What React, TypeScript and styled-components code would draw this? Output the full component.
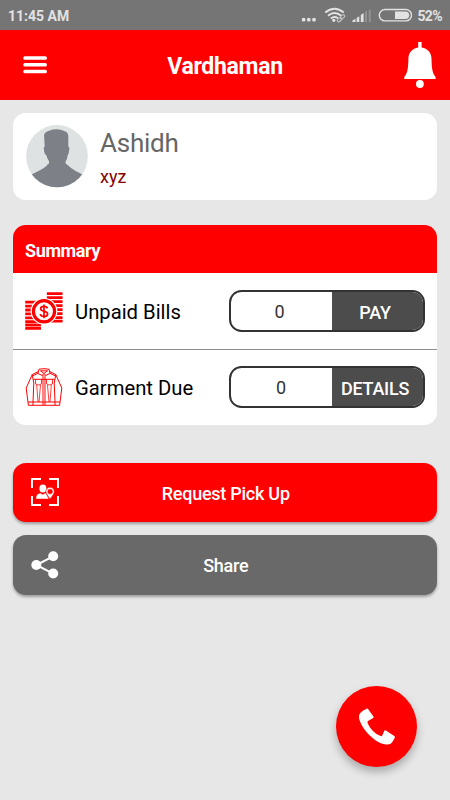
import React from "react";
import styled, { createGlobalStyle } from "styled-components";

const RED = "#ff0000";

const GlobalStyle = createGlobalStyle`
  *, *::before, *::after { box-sizing: border-box; }
  body { margin: 0; background: #e7e7e7; }
  svg { display: block; flex: none; }
  button { border: 0; padding: 0; font: inherit; color: inherit; }
`;

const Screen = styled.div`
  position: relative;
  width: 450px;
  height: 800px;
  overflow: hidden;
  background: #e7e7e7;
  font-family: Roboto, "Liberation Sans", sans-serif;
`;

const StatusBar = styled.div`
  display: flex;
  align-items: center;
  justify-content: space-between;
  height: 30px;
  padding: 1px 8px 0 8px;
  background: #757575;
  color: #e2e2e2;
`;

const Clock = styled.span`
  font-size: 14px;
  font-weight: 700;
  line-height: 16px;
`;

const StatusIcons = styled.div`
  display: flex;
  align-items: center;

  svg {
    margin-bottom: 2px;
  }
`;

const Percent = styled.span`
  margin-left: 5px;
  font-size: 14px;
  letter-spacing: -0.6px;
  font-weight: 700;
  line-height: 16px;
`;

const Header = styled.header`
  display: grid;
  grid-template-columns: 60px 1fr 60px;
  align-items: center;
  height: 70px;
  background: ${RED};
  color: #fff;
`;

const IconButton = styled.button<{ $align: "start" | "end" }>`
  display: flex;
  justify-content: ${(p) => (p.$align === "start" ? "flex-start" : "flex-end")};
  padding: ${(p) => (p.$align === "start" ? "0 0 0 23px" : "1px 14px 0 0")};
  background: none;
`;

const Title = styled.h1`
  margin: 4px 0 0;
  font-size: 23px;
  letter-spacing: -0.3px;
  line-height: 28px;
  font-weight: 700;
  text-align: center;
`;

const Content = styled.main`
  display: flex;
  flex-direction: column;
  padding: 12.5px 13px 0 12.5px;
`;

const ProfileCard = styled.section`
  display: flex;
  gap: 12.5px;
  height: 87.5px;
  padding: 12.5px 13px;
  border-radius: 12.5px;
  background: #fff;
`;

const ProfileText = styled.div`
  display: flex;
  flex-direction: column;
`;

const Name = styled.div`
  margin-top: 1px;
  font-size: 26px;
  letter-spacing: -0.25px;
  line-height: 34px;
  color: #666;
`;

const Handle = styled.div`
  margin-top: 5px;
  font-size: 18px;
  line-height: 24px;
  color: #860000;
`;

const SummaryCard = styled.section`
  display: flex;
  flex-direction: column;
  height: 200px;
  margin-top: 25px;
  border-radius: 12.5px;
  background: #fff;
  overflow: hidden;
`;

const SummaryTitle = styled.h2`
  margin: 0;
  height: 48.4px;
  padding: 2px 12.5px 0;
  background: ${RED};
  color: #fff;
  font-size: 18px;
  letter-spacing: -0.38px;
  line-height: 47px;
  font-weight: 700;
`;

const SummaryRow = styled.div`
  display: flex;
  align-items: center;
  flex: 1;
  padding: 0 12px 0 12.5px;

  & + & {
    border-top: 1px solid #8c8c8c;
  }
`;

const RowLabel = styled.span`
  flex: 1;
  padding: 1px 0 0 12px;
  font-size: 20.25px;
  line-height: 26px;
  color: #000;
`;

const Pill = styled.div`
  display: flex;
  width: 196px;
  height: 42px;
  border: 2px solid #333;
  border-radius: 12.5px;
  background: #fff;
  overflow: hidden;
`;

const Count = styled.span<{ $trim: number }>`
  width: 101px;
  padding: 0 ${(p) => p.$trim}px 0 0;
  font-size: 18px;
  line-height: 39px;
  text-align: center;
  color: #333;
`;

const PillButton = styled.button`
  flex: 1;
  padding: 2px 5px 0 0;
  background: #4c4c4c;
  color: #fff;
  font-size: 18px;
  letter-spacing: -0.25px;
  font-weight: 500;
  text-align: center;
`;

const ActionButton = styled.button<{ $tone: string; $height: number; $gap: number }>`
  display: grid;
  grid-template-columns: 46px 1fr 46px;
  align-items: center;
  height: ${(p) => p.$height}px;
  margin-top: ${(p) => p.$gap}px;
  padding-left: 18.5px;
  padding-right: 16.5px;
  border-radius: 13px;
  background: ${(p) => p.$tone};
  color: #fff;
  font-size: 18px;
  letter-spacing: -0.25px;
  font-weight: 500;
  box-shadow: 0 2px 3px rgba(0, 0, 0, 0.32);
`;

const ActionLabel = styled.span`
  padding-top: 2px;
`;

const CallButton = styled.button`
  position: absolute;
  right: 33px;
  bottom: 33px;
  display: flex;
  align-items: center;
  justify-content: center;
  width: 81px;
  height: 81px;
  border-radius: 50%;
  background: ${RED};
  box-shadow: 0 5px 9px rgba(0, 0, 0, 0.27);
`;

const StatusGlyphs = () => (
  <svg width="112" height="20" viewBox="300 5 112 20" fill="#e2e2e2">
    <circle cx="303.6" cy="19.7" r="1.9" />
    <circle cx="308.8" cy="19.7" r="1.9" />
    <circle cx="314" cy="19.7" r="1.9" />
    <g fill="none" stroke="#e2e2e2" strokeWidth="1.9">
      <path d="M325.2 12.6Q334.5 5 343.8 12.6" />
      <path d="M328 15.8Q334.5 10.3 341.3 15.8" />
      <path d="M330.8 18.6Q334.3 15.8 338 18.2" />
    </g>
    <circle cx="333.8" cy="20.3" r="1.6" />
    <g fill="none" stroke="#c4c4c4" strokeWidth="1.1">
      <rect x="337" y="18.3" width="5" height="2.8" rx="1.4" transform="rotate(-42 339.5 19.7)" />
      <rect x="340" y="15.5" width="5" height="2.8" rx="1.4" transform="rotate(-42 342.5 16.9)" />
    </g>
    <path d="M352.5 22v-1.5l2.9-1.7V22zM356.6 22v-3.9l2.7-1.8V22zM360.8 22v-7l2.8-2V22z" />
    <path d="M365 22V12.2l2-1.5V22zM368.8 22V10.2l2-1.3V22z" fill="#929292" />
    <rect x="379.3" y="9.5" width="32.2" height="11.4" rx="5.7" fill="none" stroke="#e2e2e2" strokeWidth="1.4" />
    <path d="M395 11.4h10.4a3.8 3.8 0 0 1 0 7.6H395z" />
  </svg>
);

const MenuIcon = () => (
  <svg width="24" height="18" viewBox="0 0 24 18" fill="#fff">
    <rect x="0.3" y="0.3" width="23.6" height="3.5" rx="1.5" />
    <rect x="0.3" y="7" width="23.6" height="3.5" rx="1.5" />
    <rect x="0.3" y="13.8" width="23.6" height="3.5" rx="1.5" />
  </svg>
);

const BellIcon = () => (
  <svg width="32" height="47" viewBox="0 0 32 47" fill="#fff">
    <path d="M14.2 0h3.4v5.6c6.1.9 9.8 5.3 9.9 11.2.2 8.5.5 13.7 4.1 18.3V37H.3v-1.9c3.6-4.6 3.9-9.8 4.1-18.3C4.5 10.9 8.2 6.5 14.2 5.6z" />
    <circle cx="15.9" cy="42" r="3.9" />
  </svg>
);

const Avatar = () => (
  <svg width="62" height="62.5" viewBox="0 0 186 188">
    <defs>
      <clipPath id="avatar-disc">
        <ellipse cx="93" cy="94" rx="93" ry="94" />
      </clipPath>
    </defs>
    <g clipPath="url(#avatar-disc)">
      <rect width="186" height="188" fill="#dfe2e2" />
      <path
        fill="#7d8087"
        d="M54 31Q56 20 69 17Q79 13 94 13Q108 14 116 19Q126 21 127 34L127 65Q132 67 129 80Q128 89 125 91Q124 103 119 109V116L125 120Q137 132 149 138Q163 144 170 150L186 188H0L18 148Q38 139 51 131Q63 124 65 118L69 116V109Q63 101 61 91Q54 89 53 68L56 65Z"
      />
    </g>
  </svg>
);

const CoinsIcon = () => (
  <svg width="38" height="38" viewBox="0 0 38 38" fill={RED}>
    {[0.2, 4.2, 8.2, 12.2, 16.2, 20.2, 24.2, 27.8].map((y) => (
      <rect key={y} x="21.8" y={y} width="15.8" height="2.8" rx="0.4" />
    ))}
    {[8.8, 12.7, 16.6, 20.5, 24.4, 28.2, 31.6, 35].map((y) => (
      <rect key={y} x="0.2" y={y} width="15.8" height="2.8" rx="0.4" />
    ))}
    <circle cx="19" cy="19.3" r="13.4" fill="#fff" />
    <circle cx="19" cy="19.3" r="10.6" fill="#fff" stroke={RED} strokeWidth="3.2" />
    <path
      d="M22.4 16.4C22.1 14.9 20.7 14.3 19 14.3C17 14.3 15.6 15.3 15.6 16.8C15.6 20.2 22.6 18.3 22.6 21.9C22.6 23.5 21.1 24.5 19 24.5C17 24.5 15.5 23.6 15.3 22M19 12.4V26.3"
      fill="none"
      stroke={RED}
      strokeWidth="1.7"
    />
  </svg>
);

const JacketIcon = () => (
  <svg width="38" height="38" viewBox="0 0 38 38" fill="none" stroke={RED} strokeWidth="1">
    <path d="M14 1.2Q19 .2 24 1.2L25 5.5 20.8 7.4 19 5.5 17 7.4 12.9 5.5zM15.5 2.8h7L19 5.5z" />
    <path d="M13 3.6 7.2 6.6 1.2 20 3.4 37.3H34.6L36.8 20 30.8 6.6 25 3.6" />
    <path d="M7.2 6.6 8.8 15 8 34M30.8 6.6 29.2 15 30 34M3 34H35M8 34v3.3M30 34v3.3" />
    <path d="M7.8 7.8 13 5.2M30.2 7.8 25 5.2M8.5 11.3H29.5" />
    <path d="M17.8 7v30M20.2 7v30M19 7v30" strokeWidth="0.7" />
    <path d="M10.5 11.5v4.4l3 1.2 3-1.2v-4.4M21.5 11.5v4.4l3 1.2 3-1.2v-4.4" strokeWidth="0.8" />
    <path d="M11.7 17 13 34M15.5 17 14 34M22.5 17 24 34M26.3 17 25 34" strokeWidth="0.75" />
  </svg>
);

const PickUpIcon = () => (
  <svg width="28" height="28" viewBox="0 0 28 28" fill="#fff">
    <path
      d="M1 10V1H10M18 1H27V10M27 18V27H18M10 27H1V18"
      fill="none"
      stroke="#fff"
      strokeWidth="1.9"
    />
    <ellipse cx="11.9" cy="10.6" rx="3.5" ry="4" />
    <path d="M5.2 20.7C5.2 17.2 6.3 16 9.3 15.2L11.9 16.7 14.5 15.1 17.7 20.7z" />
    <path
      fillRule="evenodd"
      d="M19.1 21C16.8 17.7 14.9 15.6 14.9 13.5a4.2 4.2 0 0 1 8.4 0C23.3 15.6 21.4 17.7 19.1 21zM19.1 11.2a2.4 2.4 0 1 0 0 4.8 2.4 2.4 0 0 0 0-4.8z"
      stroke={RED}
      strokeWidth="0.5"
    />
  </svg>
);

const ShareIcon = () => (
  <svg width="28" height="28" viewBox="0 0 28 28" fill="#fff">
    <path d="M22.2 5.4 5.3 14 22.2 22.6" fill="none" stroke="#fff" strokeWidth="2" />
    <circle cx="5.3" cy="14" r="5" />
    <circle cx="22.2" cy="5.3" r="5" />
    <circle cx="22.2" cy="22.5" r="5" />
  </svg>
);

const PhoneIcon = () => (
  <svg width="38" height="38" viewBox="0 0 38 38" fill="#fff">
    <path d="M8.5.7Q9.4.3 10.1 1L15.4 8.4Q16 9.3 15.2 10L10 12.9Q9.2 13.5 9.6 15C12.5 21.5 16.7 25.7 22.7 28.1Q23.8 28.4 24.2 27.5L26.3 22.8Q26.8 21.7 27.9 22.4L36.3 28.1Q37.2 28.8 36.8 29.7L34 34.6Q32.7 36.8 28.8 36.6C17.5 36 3.3 20.7 1 10.2Q.3 6.8 2.5 4.7Q5 2.3 8.5.7Z" />
  </svg>
);

export default function App() {
  return (
    <>
      <GlobalStyle />
      <Screen>
        <StatusBar>
          <Clock>11:45 AM</Clock>
          <StatusIcons>
            <StatusGlyphs />
            <Percent>52%</Percent>
          </StatusIcons>
        </StatusBar>
        <Header>
          <IconButton $align="start" aria-label="Menu">
            <MenuIcon />
          </IconButton>
          <Title>Vardhaman</Title>
          <IconButton $align="end" aria-label="Notifications">
            <BellIcon />
          </IconButton>
        </Header>
        <Content>
          <ProfileCard>
            <Avatar />
            <ProfileText>
              <Name>Ashidh</Name>
              <Handle>xyz</Handle>
            </ProfileText>
          </ProfileCard>
          <SummaryCard>
            <SummaryTitle>Summary</SummaryTitle>
            <SummaryRow>
              <CoinsIcon />
              <RowLabel>Unpaid Bills</RowLabel>
              <Pill>
                <Count $trim={4}>0</Count>
                <PillButton>PAY</PillButton>
              </Pill>
            </SummaryRow>
            <SummaryRow>
              <JacketIcon />
              <RowLabel>Garment Due</RowLabel>
              <Pill>
                <Count $trim={1}>0</Count>
                <PillButton>DETAILS</PillButton>
              </Pill>
            </SummaryRow>
          </SummaryCard>
          <ActionButton $tone={RED} $height={59.5} $gap={37.5}>
            <PickUpIcon />
            <ActionLabel>Request Pick Up</ActionLabel>
          </ActionButton>
          <ActionButton $tone="#696969" $height={60} $gap={12.5}>
            <ShareIcon />
            <ActionLabel>Share</ActionLabel>
          </ActionButton>
        </Content>
        <CallButton aria-label="Call">
          <PhoneIcon />
        </CallButton>
      </Screen>
    </>
  );
}
